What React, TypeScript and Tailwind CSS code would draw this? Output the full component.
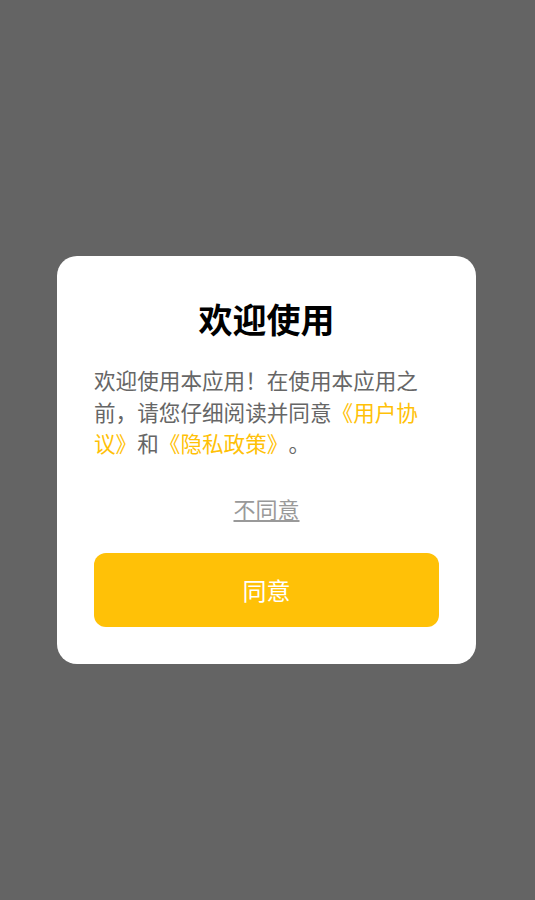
import React from "react";

const cjk = { fontFamily: '"Noto Sans CJK SC", "Noto Sans", sans-serif' };

export default function App() {
  return (
    <div
      className="min-h-screen w-full bg-[#646464] flex items-center justify-center pt-[20px] [text-spacing-trim:space-all]"
      style={cjk}
    >
      <div className="w-[419px] bg-white rounded-[20px] px-[37px] pt-[40px] pb-[37px] -ml-[2px]">
        <h1 className="text-center text-[34px] leading-[46px] font-bold text-black">
          欢迎使用
        </h1>
        <p className="mt-[22px] text-[21.6px] leading-[31.5px] text-[#666666]">
          欢迎使用本应用！在使用本应用之前，请您仔细阅读并同意
          <span className="text-[#ffc107]">《用户协议》</span>和
          <span className="text-[#ffc107]">《隐私政策》</span>。
        </p>
        <div className="mt-[33px] flex justify-center">
          <button
            type="button"
            className="text-[22px] leading-[32px] text-[#999999] underline underline-offset-[2px]"
          >
            不同意
          </button>
        </div>
        <button
          type="button"
          className="mt-[29px] w-full h-[74px] rounded-[12px] bg-[#ffc107] text-white text-[24px] flex items-center justify-center"
        >
          同意
        </button>
      </div>
    </div>
  );
}
